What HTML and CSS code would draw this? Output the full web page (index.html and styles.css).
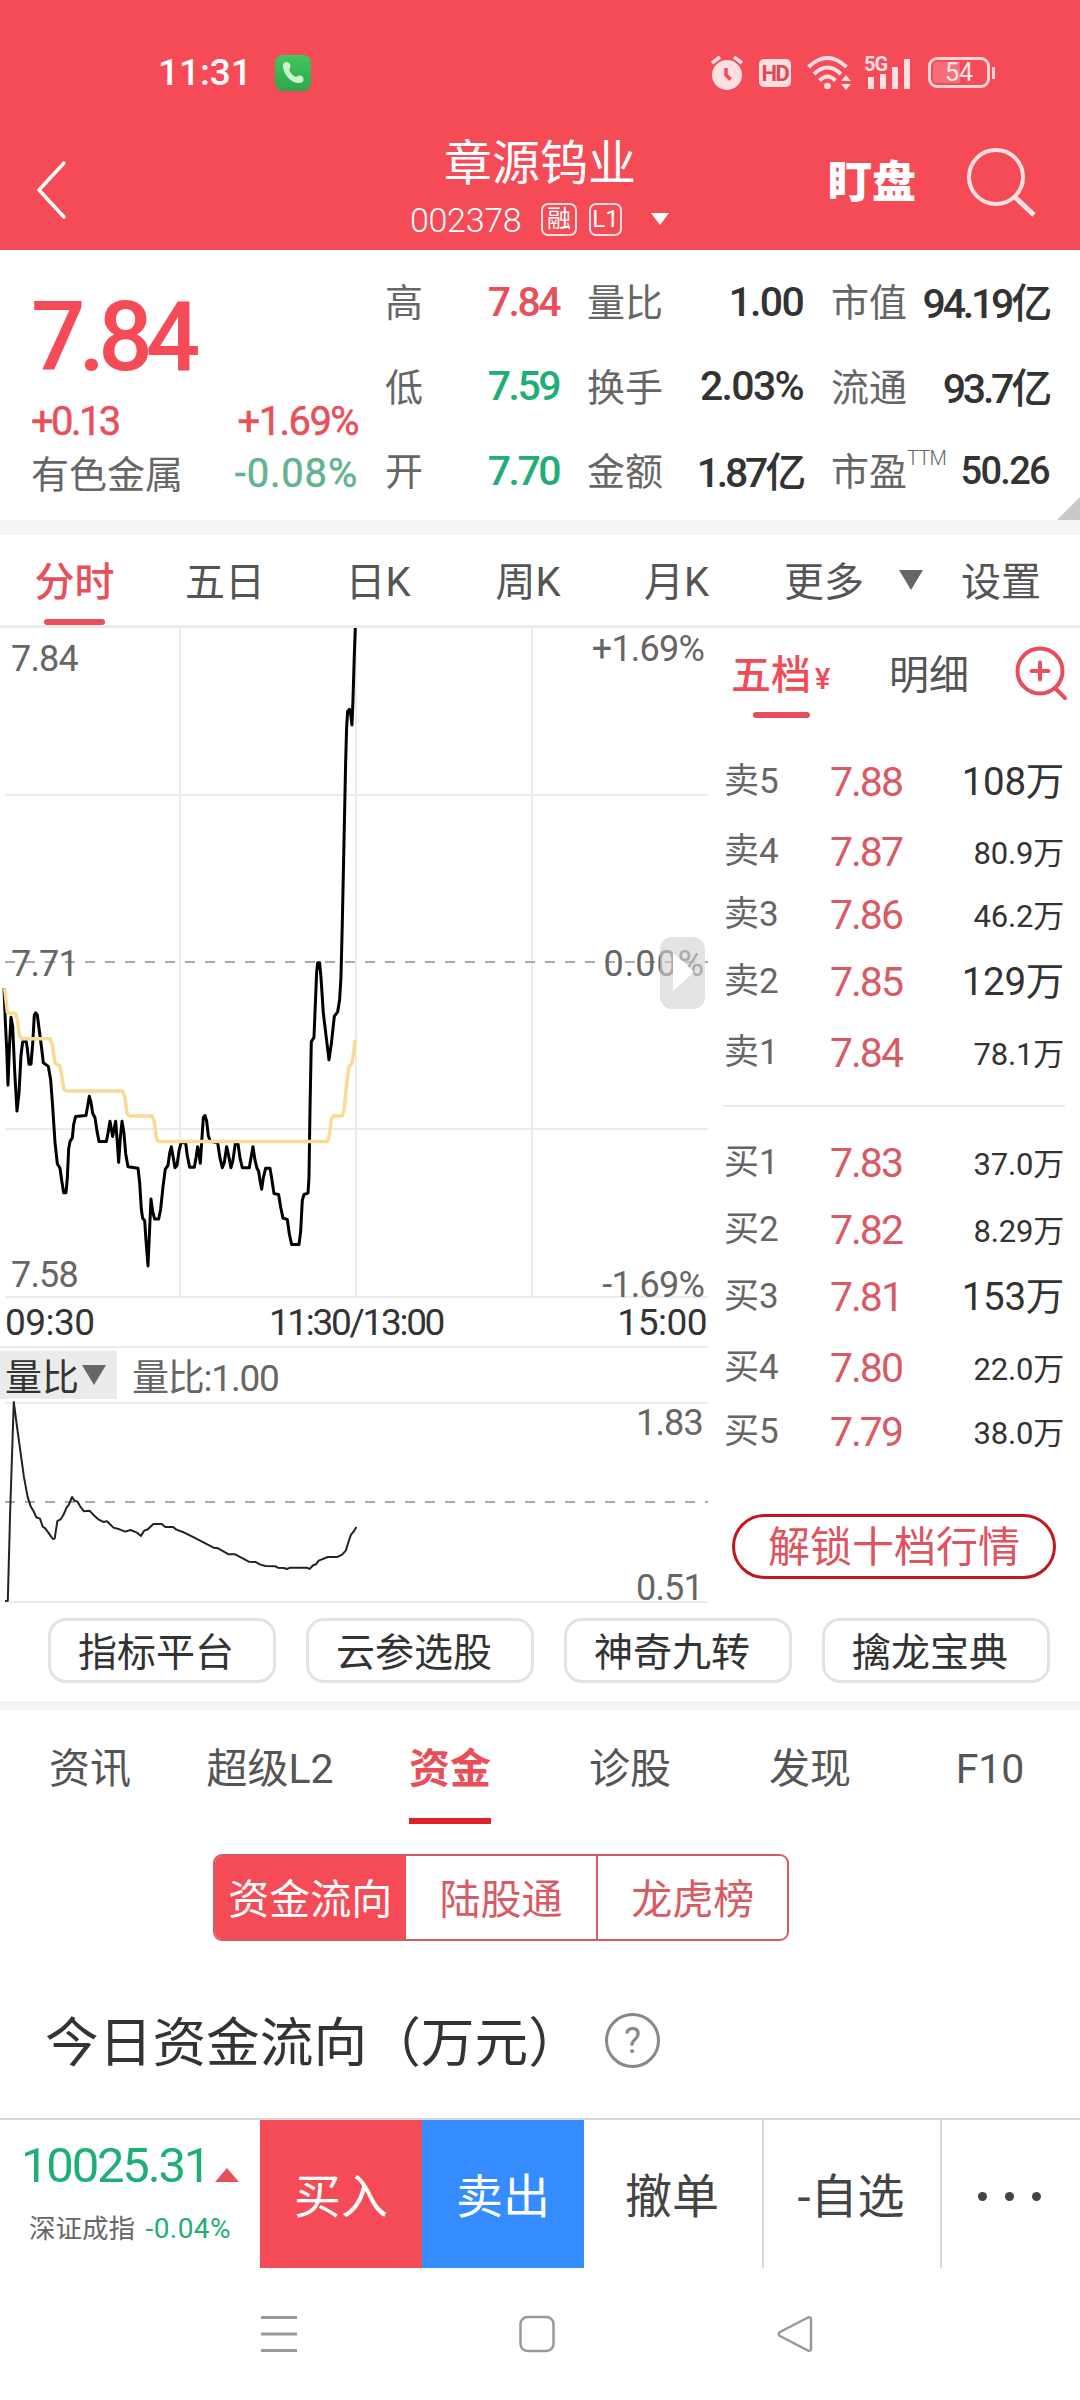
FILE: index.html
```html
<!DOCTYPE html>
<html lang="zh-CN">
<head>
  <meta charset="UTF-8">
  <title>章源钨业 002378</title>
  <link rel="stylesheet" href="styles.css">
</head>
<body>

  <header class="header">
    <div class="status">
      <span class="clock">11:31</span>
      <svg class="phone" width="36" height="36" viewBox="0 0 36 36">
        <defs>
          <linearGradient id="green" x1="0" y1="0" x2="0" y2="1">
            <stop offset="0" stop-color="#42c75c"/><stop offset="1" stop-color="#2ea64a"/>
          </linearGradient>
        </defs>
        <rect width="36" height="36" rx="8" fill="url(#green)"/>
        <path d="M8 12C7.500 9 9 7 11.500 7c2.500 0 4 2 4 4 0 2-1.500 2.500-1.200 4 1 3 3.500 5.500 6.500 7 1.200 0 1.700-1.500 3.700-1.500 2.500 0 4 1.500 4 4S27 28 24 28C16 28 9 20 8 12z" fill="#cbf2d2"/>
      </svg>
      <div class="status-icons">
        <svg width="32" height="36" viewBox="0 0 32 36">
          <circle cx="16" cy="20" r="15" fill="#ffdfe2"/>
          <path d="M1 8l8-6M31 8l-8-6" stroke="#ffdfe2" stroke-width="3.500"/>
          <path d="M15 13v7l4.500 4.500" fill="none" stroke="#f54b57" stroke-width="3.500"/>
        </svg>
        <span class="hd">HD</span>
        <svg width="46" height="36" viewBox="0 0 46 36">
          <g fill="none" stroke="#ffdfe2" stroke-width="4">
            <path d="M1.500 12q19-18 38 0"/>
            <path d="M7 19q13.500-13 27 0"/>
            <path d="M12.500 25.500q8-8 16 0"/>
          </g>
          <circle cx="20.500" cy="31" r="3.300" fill="#ffdfe2"/>
          <path d="M34 26l5-6 5 6zM34 29l5 6 5-6z" fill="#ffdfe2"/>
        </svg>
        <svg class="signal" width="48" height="36" viewBox="0 0 48 36">
          <text x="0" y="16" class="net">5G</text>
          <path d="M4 22h6v12h-6zM16 19h6v15h-6zM28 12h6v22h-6zM40 4h6v30h-6z" fill="#ffdfe2"/>
        </svg>
        <div class="battery"><span>54</span></div>
      </div>
    </div>

    <div class="titlebar">
      <svg class="back" width="32" height="60" viewBox="0 0 32 60"><path d="M29 3L4 30l25 27" fill="none" stroke="#fff" stroke-width="3.500" stroke-linecap="round" stroke-linejoin="round"/></svg>
      <div class="title">
        <div class="name">章源钨业</div>
        <div class="code"><span class="digits">002378</span><i>融</i><i>L1</i><b></b></div>
      </div>
      <div class="watch">盯盘</div>
      <svg class="search" width="72" height="72" viewBox="0 0 72 72"><g fill="none" stroke="#ffe0e2" stroke-width="4"><circle cx="29" cy="30" r="27"/><path d="M48 50l19 18" stroke-width="5"/></g></svg>
    </div>
  </header>

  <section class="quote">
    <div class="price">
      <div class="last">7.84</div>
      <div class="change"><span>+0.13</span><span>+1.69%</span></div>
      <div class="sector"><span>有色金属</span><span class="down">-0.08%</span></div>
    </div>
    <div class="stats">
      <div><span>高</span><b class="red">7.84</b></div>
      <div><span>量比</span><b>1.00</b></div>
      <div><span>市值</span><b class="tight">94.19亿</b></div>
      <div><span>低</span><b class="green">7.59</b></div>
      <div><span>换手</span><b>2.03%</b></div>
      <div><span>流通</span><b class="tight">93.7亿</b></div>
      <div><span>开</span><b class="green">7.70</b></div>
      <div><span>金额</span><b class="tight">1.87亿</b></div>
      <div><span>市盈<sup>TTM</sup></span><b class="small">50.26</b></div>
    </div>
    <div class="corner"></div>
  </section>

  <nav class="periods">
    <div class="active">分时</div>
    <div>五日</div>
    <div>日K</div>
    <div>周K</div>
    <div>月K</div>
    <div class="more">更多<i class="caret"></i></div>
    <div class="set">设置</div>
  </nav>

  <main class="market">
    <div class="charts">
      <div class="chart">
        <svg width="708" height="671" viewBox="0 0 708 671">
          <g stroke="#ebebeb" stroke-width="2">
            <path d="M180 0v669M356 0v669M532 0v669M5 167h703M5 501h703M5 669h703"/>
          </g>
          <path d="M5 334h703" stroke="#aaa" stroke-width="2" stroke-dasharray="10 10"/>
          <g class="labels">
            <text x="11" y="43">7.84</text>
            <text x="11" y="348">7.71</text>
            <text x="11" y="659">7.58</text>
            <text x="704" y="33" class="end">+1.69%</text>
            <text x="705" y="348" class="end zero">0.00%</text>
            <text x="704" y="669" class="end">-1.69%</text>
          </g>
          <g transform="translate(0 -8) scale(.3333 .4464)" class="lines">
            <polyline class="now" points="12,825 16,900 20,960 24,1042 28,960 33,890 38,910 44,1010 51,1100 57,1060 63,975 68,945 78,942 82,960 87,995 93,995 98,950 103,885 107,880 112,885 118,920 125,960 130,992 145,1000 152,1030 158,1090 165,1170 172,1218 180,1228 185,1255 191,1283 198,1283 202,1250 206,1185 210,1168 217,1160 221,1130 227,1112 258,1110 264,1085 268,1067 273,1080 278,1105 285,1115 291,1145 297,1168 319,1168 324,1150 330,1123 338,1157 347,1123 352,1170 356,1215 361,1160 366,1123 372,1150 377,1195 384,1225 414,1228 419,1260 424,1320 428,1340 434,1345 438,1390 444,1447 448,1380 453,1297 458,1325 464,1342 476,1342 482,1320 489,1270 496,1230 504,1222 509,1195 514,1180 520,1205 525,1227 531,1222 537,1190 543,1171 557,1171 562,1200 569,1226 583,1226 588,1205 593,1180 597,1195 601,1217 605,1170 610,1115 615,1110 620,1122 625,1155 631,1168 653,1171 660,1205 667,1227 673,1215 680,1180 686,1200 693,1227 699,1210 706,1173 714,1173 720,1205 727,1227 748,1227 753,1205 759,1180 765,1210 771,1228 776,1235 780,1255 785,1275 790,1250 797,1228 810,1228 815,1250 822,1285 836,1287 842,1315 849,1340 862,1343 868,1375 875,1399 897,1399 902,1370 907,1300 912,1287 924,1284 927,1250 930,1100 934,945 942,935 945,880 950,790 953,768 959,768 963,800 970,880 978,930 987,985 994,950 1003,888 1013,878 1019,850 1023,800 1027,680 1032,500 1037,320 1040,240 1043,205 1048,200 1052,210 1056,235 1059,180 1063,80 1066,18"/>
            <polyline class="avg" points="14,825 22,878 28,881 46,881 52,895 58,930 64,938 150,938 157,950 164,990 171,996 179,998 184,1015 191,1050 198,1055 368,1055 375,1070 381,1105 388,1111 457,1111 463,1125 469,1160 475,1168 983,1168 988,1155 994,1118 1000,1111 1027,1111 1033,1095 1040,1040 1047,1000 1056,993 1061,970 1065,940"/>
          </g>
        </svg>
        <div class="play"><i></i></div>
      </div>

      <div class="times"><span>09:30</span><span class="mid">11:30/13:00</span><span>15:00</span></div>

      <div class="indicator">
        <div class="pick">量比<i class="caret"></i></div>
        <div class="val">量比:1.00</div>
      </div>

      <svg class="volume" width="708" height="202" viewBox="0 0 708 202">
        <path d="M5 2h703M5 201h703" stroke="#ebebeb" stroke-width="2"/>
        <path d="M5 101h703" stroke="#aaa" stroke-width="2" stroke-dasharray="10 10"/>
        <g class="labels">
          <text x="703" y="34" class="end">1.83</text>
          <text x="703" y="199" class="end">0.51</text>
        </g>
        <g transform="translate(0 -121) scale(.4592 .3333)" class="lines">
          <polyline class="ratio" points="11,963 17,962 22,700 30,366 37,440 44,510 52,590 60,650 67,680 73,693 79,712 87,716 93,740 99,746 108,763 115,777 119,776 125,723 132,718 138,705 145,683 150,674 157,651 162,662 169,665 175,680 183,694 195,692 203,704 214,718 225,726 233,724 247,743 260,748 273,755 284,750 297,757 307,768 314,752 322,748 334,732 352,732 360,741 377,741 384,749 400,757 420,771 440,785 465,803 475,805 498,823 512,823 542,845 556,846 567,854 578,858 600,859 605,863 618,864 625,867 632,863 668,863 674,867 682,856 688,853 694,842 714,831 735,831 745,824 753,812 758,790 764,765 770,755 776,741"/>
        </g>
      </svg>
    </div>

    <aside class="book">
      <div class="book-tabs">
        <div class="active">五档<small>¥</small></div>
        <div>明细</div>
        <svg width="56" height="56" viewBox="0 0 56 56"><g fill="none" stroke="#e94f5a" stroke-width="4" stroke-linecap="round"><circle cx="26" cy="26" r="22.500"/><path d="M26 17.500v17M17.500 26h17M41 43l10 10"/></g></svg>
      </div>
      <div class="rows sell">
        <div><span>卖5</span><b>7.88</b><em class="big">108万</em></div>
        <div><span>卖4</span><b>7.87</b><em>80.9万</em></div>
        <div><span>卖3</span><b>7.86</b><em>46.2万</em></div>
        <div><span>卖2</span><b>7.85</b><em class="big">129万</em></div>
        <div><span>卖1</span><b>7.84</b><em>78.1万</em></div>
      </div>
      <div class="rows buy">
        <div><span>买1</span><b>7.83</b><em>37.0万</em></div>
        <div><span>买2</span><b>7.82</b><em>8.29万</em></div>
        <div><span>买3</span><b>7.81</b><em class="big">153万</em></div>
        <div><span>买4</span><b>7.80</b><em>22.0万</em></div>
        <div><span>买5</span><b>7.79</b><em>38.0万</em></div>
      </div>
      <div class="unlock">解锁十档行情</div>
    </aside>
  </main>

  <div class="tools">
    <div>指标平台</div>
    <div>云参选股</div>
    <div>神奇九转</div>
    <div>擒龙宝典</div>
  </div>

  <nav class="tabs">
    <div>资讯</div>
    <div>超级L2</div>
    <div class="active">资金</div>
    <div>诊股</div>
    <div>发现</div>
    <div>F10</div>
  </nav>

  <div class="segment">
    <div class="active">资金流向</div>
    <div>陆股通</div>
    <div>龙虎榜</div>
  </div>

  <div class="flow-title"><span>今日资金流向（万元）</span><span class="help">?</span></div>

  <footer class="bottom">
    <div class="index">
      <div class="point">10025.31<i></i></div>
      <div class="index-name">深证成指 <span>-0.04%</span></div>
    </div>
    <div class="btn buy-btn">买入</div>
    <div class="btn sell-btn">卖出</div>
    <div class="btn cancel">撤单</div>
    <div class="btn fav">-自选</div>
    <div class="dots"><i></i><i></i><i></i></div>
  </footer>

  <div class="sysnav">
    <svg width="36" height="38" viewBox="0 0 36 38"><path d="M0 2.500h36M0 19h36M0 35.500h36" stroke="#999" stroke-width="3"/></svg>
    <svg width="36" height="38" viewBox="0 0 36 38"><rect x="1.500" y="2" width="33" height="34" rx="7" fill="none" stroke="#999" stroke-width="2.500"/></svg>
    <svg width="36" height="38" viewBox="0 0 36 38"><path d="M31 2.500L3 17q-2.500 2 0 4l28 14.500q3 1 3-2v-29q0-3-3-2z" fill="none" stroke="#999" stroke-width="2.500"/></svg>
  </div>

</body>
</html>
```

FILE: styles.css
```css
* {
  box-sizing: border-box;
}

body {
  margin: 0;
  width: 1080px;
  height: 2400px;
  overflow: hidden;
  background: #fff;
  color: #333;
  font-family: Roboto, "Noto Sans CJK SC", sans-serif;
  white-space: nowrap;
}

i, em {
  font-style: normal;
}

svg {
  display: block;
  overflow: visible;
}

/* header */
.header {
  height: 250px;
  background: #f54b57;
  color: #fff;
}

.status {
  display: flex;
  align-items: center;
  height: 145px;
  padding: 0 85px 0 158px;
}

.clock {
  width: 117px;
  font-size: 37px;
  font-weight: 500;
}

.status-icons {
  display: flex;
  align-items: center;
  margin-left: auto;
  gap: 16px;
}

.hd {
  width: 32px;
  height: 28px;
  border-radius: 5px;
  background: #ffdfe2;
  color: #e04a55;
  font-size: 22px;
  font-weight: 700;
  line-height: 29px;
  text-align: center;
  letter-spacing: -1.5px;
}

.signal {
  margin-left: -5px;
}

.net {
  font-size: 20px;
  font-weight: 700;
  letter-spacing: -1px;
  fill: #ffdfe2;
}

.battery {
  position: relative;
  width: 62px;
  height: 31px;
  margin-right: 5px;
  border: 3px solid #ffd3d7;
  border-radius: 9px;
  background: linear-gradient(90deg, #f76e78 52%, transparent 52%) content-box;
  padding: 2px;
  color: #ffe6e8;
  font-size: 25px;
  line-height: 22px;
  text-align: center;
}

.battery::after {
  content: "";
  position: absolute;
  right: -8px;
  top: 7px;
  width: 3px;
  height: 12px;
  background: #ffd3d7;
}

.titlebar {
  display: grid;
  grid-template-columns: 35px 370px 270px 154px 139px 1fr;
  height: 105px;
}

.back {
  grid-column: 2;
  margin-top: 15px;
}

.title {
  text-align: center;
}

.name {
  height: 46px;
  margin-top: -5px;
  font-size: 48px;
  line-height: 48px;
}

.code {
  display: flex;
  align-items: center;
  height: 34px;
  margin-top: 16px;
  padding-left: 5px;
  font-size: 34px;
  font-weight: 300;
}

.digits {
  width: 131px;
  padding-top: 2px;
  text-align: left;
  letter-spacing: -0.3px;
}

.code i {
  width: 36px;
  height: 33px;
  margin-right: 12px;
  border: 2px solid #ffe0e2;
  border-radius: 7px;
  font-size: 24px;
  font-weight: 400;
  line-height: 29px;
}

.code i + i {
  width: 33px;
  margin-right: 29px;
}

.code b {
  flex: none;
  border: 9px solid transparent;
  border-top: 12px solid #fff;
  border-bottom: 0;
}

.watch {
  padding: 13px 0 0 153px;
  width: 0;
  font-size: 44px;
  font-weight: 900;
  line-height: 50px;
}

.search {
  margin-left: 138px;
  margin-top: 2px;
}

/* quote */
.quote {
  position: relative;
  display: flex;
  height: 285px;
  border-bottom: 15px solid #f5f5f5;
}

.price {
  width: 385px;
  padding: 37px 27px 0 31px;
  color: #e94f5a;
}

.last {
  height: 107px;
  color: #f54b57;
  font-size: 96px;
  font-weight: 500;
  line-height: 100px;
  letter-spacing: -7px;
}

.change, .sector {
  display: flex;
  justify-content: space-between;
  align-items: center;
  height: 53px;
  font-size: 40px;
  letter-spacing: -2.6px;
}

.change span {
  margin-top: 2px;
  -webkit-text-stroke: 0.5px;
}

.change span + span {
  letter-spacing: -1.6px;
}

.sector span:first-child {
  margin-top: -4px;
  color: #666;
  font-size: 38px;
  letter-spacing: 0;
}

.sector .down {
  color: #63b38e;
  letter-spacing: 0.8px;
  -webkit-text-stroke: 0.5px;
}

.stats {
  display: grid;
  grid-template-columns: 174px 216px 218px;
  grid-template-rows: repeat(3, 84.5px);
  column-gap: 28px;
  padding: 9px 0 0 1px;
}

.stats div {
  display: flex;
  justify-content: space-between;
  align-items: center;
  color: #666;
  font-size: 38px;
}

.stats span {
  margin: -3px 0 0 -1px;
}

.stats b {
  margin: 1px 1px 0 0;
  color: #333;
  font-size: 41px;
  font-weight: 500;
  letter-spacing: -1.7px;
}

.stats b.tight {
  margin-top: -2px;
  letter-spacing: -3.2px;
}

.stats b.red {
  color: #e94f5a;
  letter-spacing: -2.5px;
}

.stats b.green {
  color: #1fae75;
  letter-spacing: -2.5px;
}

.stats b.small {
  font-size: 38px;
}

.stats sup {
  position: absolute;
  margin-top: 5px;
  font-size: 20px;
  font-weight: 300;
  letter-spacing: -0.8px;
}

.corner {
  position: absolute;
  right: 0;
  bottom: 0;
  border-left: 23px solid transparent;
  border-bottom: 23px solid #c8c8c8;
}

/* periods */
.periods {
  display: grid;
  grid-template-columns: 149px 152px 154px 146px 151px 209px 1fr;
  height: 93px;
  border-bottom: 3px solid #ebebeb;
  color: #555;
  font-size: 40px;
  line-height: 96px;
  text-align: center;
}

.periods .active {
  display: flex;
  flex-direction: column;
  align-items: center;
  color: #e94f5a;
  font-weight: 500;
}

.periods .active::after {
  content: "";
  width: 61px;
  height: 6px;
  margin-top: -12px;
  border-radius: 3px;
  background: #e94f5a;
}

.more {
  display: flex;
  align-items: center;
  gap: 35px;
  padding-left: 32px;
}

.set {
  text-align: left;
}

.caret {
  flex: none;
  border: 12px solid transparent;
  border-top: 20px solid #666;
  border-bottom: 0;
}

.more .caret {
  margin-top: -6px;
}

/* market */
.market {
  display: grid;
  grid-template-columns: 708px 372px;
  height: 976px;
}

.chart {
  position: relative;
  height: 671px;
}

.labels {
  fill: #666;
  font-size: 36px;
  letter-spacing: -0.8px;
}

.labels .zero {
  letter-spacing: 1px;
}

.end {
  text-anchor: end;
}

.lines polyline {
  fill: none;
  stroke-linejoin: round;
  vector-effect: non-scaling-stroke;
}

.now {
  stroke: #000;
  stroke-width: 3;
}

.avg {
  stroke: #f8dc96;
  stroke-width: 3.5;
}

.ratio {
  stroke: #222;
  stroke-width: 2;
}

.play {
  position: absolute;
  left: 660px;
  top: 309px;
  width: 45px;
  height: 72px;
  padding: 16px 0 0 13px;
  border-radius: 12px;
  background: rgba(210, 210, 210, 0.62);
}

.play i {
  display: block;
  width: 0;
  border: 19px solid transparent;
  border-left: 21px solid #fff;
  border-right: 0;
}

.times {
  display: flex;
  justify-content: space-between;
  height: 49px;
  padding: 0 1px 0 5px;
  border-bottom: 2px solid #ebebeb;
  font-size: 37px;
  line-height: 47px;
  letter-spacing: -0.5px;
}

.times .mid {
  letter-spacing: -2.3px;
}

.indicator {
  display: flex;
  align-items: center;
  height: 53px;
  font-size: 37px;
}

.pick {
  display: flex;
  align-items: center;
  gap: 3px;
  width: 117px;
  height: 48px;
  padding-left: 5px;
  background: #ebebeb;
}

.val {
  padding-left: 15px;
  color: #666;
  letter-spacing: -1.2px;
}

/* order book */
.book {
  padding: 0 15px;
}

.book-tabs {
  display: flex;
  height: 119px;
  padding-left: 8px;
  color: #555;
  font-size: 40px;
  line-height: 95px;
}

.book-tabs div {
  flex: none;
  width: 158px;
}

.book-tabs div:nth-child(2) {
  width: 125px;
}

.book-tabs .active {
  color: #f04c58;
  font-weight: 500;
}

.book-tabs .active::after {
  content: "";
  display: block;
  width: 57px;
  height: 6px;
  margin: -15px 0 0 22px;
  border-radius: 3px;
  background: #e94f5a;
}

.book-tabs small {
  margin-left: 4px;
  font-size: 29px;
}

.book-tabs svg {
  flex: none;
  margin-top: 17px;
}

.rows {
  display: grid;
}

.sell {
  grid-template-rows: 70px 70px 56px 78px 64px;
  padding-bottom: 20px;
  border-bottom: 2px solid #ebebeb;
  height: 360px;
}

.buy {
  grid-template-rows: 64px 70px 64px 78px 50px;
  padding-top: 24px;
}

.rows div {
  display: grid;
  grid-template-columns: 107px 90px 1fr;
  align-items: center;
  line-height: 40px;
}

.rows span {
  padding-left: 1px;
  color: #666;
  font-size: 35px;
}

.rows b {
  margin-top: -1px;
  color: #d85a64;
  font-size: 41px;
  font-weight: 400;
  letter-spacing: -2px;
}

.rows em {
  padding: 3px 1px 0 0;
  font-size: 31px;
  text-align: right;
  letter-spacing: -0.2px;
}

.rows em.big {
  padding-top: 0;
  font-size: 38.5px;
  letter-spacing: -0.3px;
}

.unlock {
  width: 324px;
  height: 65px;
  margin: 57px 0 0 9px;
  border: 3px solid #c5161d;
  border-radius: 33px;
  color: #e0525c;
  font-size: 42px;
  line-height: 62px;
  text-align: center;
}

/* tool pills */
.tools {
  display: grid;
  grid-template-columns: repeat(4, 228px);
  gap: 30px;
  height: 106px;
  padding: 14px 0 0 48px;
  border-bottom: 9px solid #f5f5f5;
}

.tools div {
  height: 65px;
  border: 3px solid #e3e3e3;
  border-radius: 18px;
  font-size: 39px;
  line-height: 64px;
  text-align: center;
  padding-right: 12px;
}

/* info tabs */
.tabs {
  display: grid;
  grid-template-columns: repeat(6, 180px);
  height: 144px;
  color: #555;
  font-size: 41px;
  line-height: 119px;
  text-align: center;
}

.tabs .active {
  color: #e94f5a;
  font-weight: 700;
}

.tabs .active::after {
  content: "";
  display: block;
  width: 82px;
  height: 6px;
  margin: -11px auto 0;
  background: #e0222b;
}

.segment {
  display: grid;
  grid-template-columns: repeat(3, 1fr);
  width: 576px;
  height: 87px;
  margin-left: 213px;
  border: 2px solid #d85a64;
  border-radius: 9px;
  overflow: hidden;
  color: #d85a64;
  font-size: 41px;
  line-height: 89px;
  text-align: center;
}

.segment div + div + div {
  border-left: 2px solid #d85a64;
}

.segment .active {
  background: #f54b57;
  color: #fff;
}

.flow-title {
  display: flex;
  align-items: center;
  height: 177px;
  padding: 21px 0 0 45px;
  font-size: 53.7px;
}

.flow-title span:first-child {
  margin-top: -4px;
}

.help {
  width: 55px;
  height: 55px;
  margin-left: 23px;
  border: 3px solid #888;
  border-radius: 50%;
  color: #888;
  font-size: 36px;
  line-height: 50px;
  text-align: center;
}

/* bottom bar */
.bottom {
  display: grid;
  grid-template-columns: 260px 162px 162px 180px 178px 1fr;
  grid-template-rows: 148px;
  height: 150px;
  border-top: 2px solid #d8d8d8;
}

.index {
  padding: 17px 0 0 21px;
}

.point {
  display: flex;
  align-items: baseline;
  height: 58px;
  color: #1fae75;
  font-size: 49px;
  line-height: 58px;
  letter-spacing: -2.2px;
}

.point i {
  margin: 0 0 2px 6px;
  border: 12px solid transparent;
  border-bottom: 14px solid #e94f5a;
  border-top: 0;
}

.index-name {
  padding: 12px 0 0 8px;
  color: #666;
  font-size: 26.5px;
}

.index-name span {
  margin-left: 4px;
  color: #1fae75;
  letter-spacing: 0.4px;
  font-size: 28px;
}

.btn {
  height: 148px;
  color: #444;
  font-size: 47px;
  line-height: 154px;
  text-align: center;
}

.buy-btn {
  background: #f54b57;
  color: #fff;
}

.sell-btn {
  background: #348cff;
  color: #fff;
}

.cancel, .fav {
  padding-right: 2px;
  border-right: 2px solid #d8d8d8;
}

.dots {
  display: flex;
  align-items: center;
  justify-content: center;
  gap: 18px;
  padding: 4px 3px 0 0;
}

.dots i {
  width: 9px;
  height: 9px;
  border-radius: 50%;
  background: #444;
}

.sysnav {
  display: flex;
  gap: 222px;
  padding: 47px 0 0 261px;
}
```
